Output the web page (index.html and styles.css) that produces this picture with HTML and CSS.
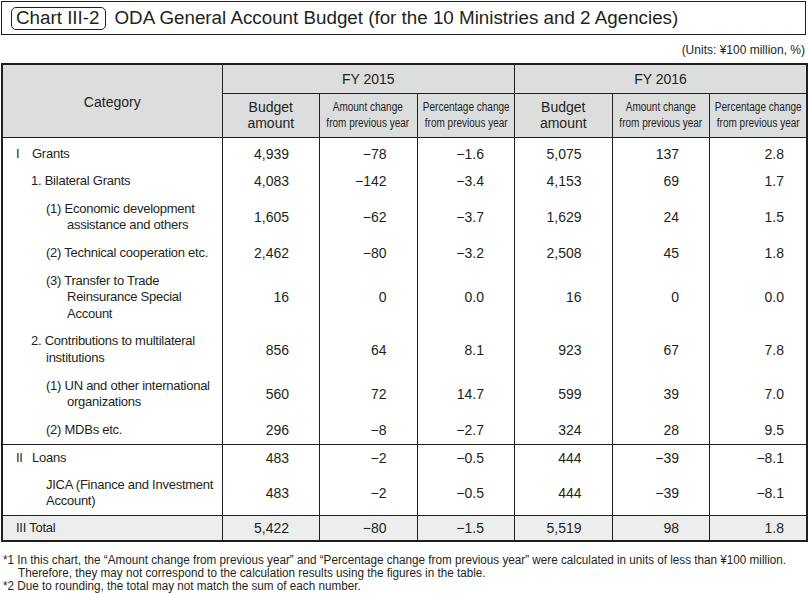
FILE: index.html
```html
<!DOCTYPE html>
<html lang="en">
<head>
<meta charset="utf-8">
<title>Chart III-2 ODA General Account Budget</title>
<link rel="stylesheet" href="styles.css">
</head>
<body>
<div class="page">
  <header class="title-box">
    <span class="chart-tag">Chart III-2</span>
    <h1 class="title">ODA General Account Budget (for the 10 Ministries and 2 Agencies)</h1>
  </header>
  <p class="units">(Units: ¥100 million, %)</p>
  <table class="budget">
    <colgroup>
      <col class="c-cat">
      <col class="c-num"><col class="c-num"><col class="c-num">
      <col class="c-num"><col class="c-num"><col class="c-num">
    </colgroup>
    <thead>
      <tr class="hr1">
        <th rowspan="2" class="h-cat">Category</th>
        <th colspan="3" class="h-fy">FY 2015</th>
        <th colspan="3" class="h-fy">FY 2016</th>
      </tr>
      <tr class="hr2">
        <th class="h-sub">Budget<br>amount</th>
        <th class="h-sub"><span class="cond">Amount change<br>from previous year</span></th>
        <th class="h-sub"><span class="cond">Percentage change<br>from previous year</span></th>
        <th class="h-sub">Budget<br>amount</th>
        <th class="h-sub"><span class="cond">Amount change<br>from previous year</span></th>
        <th class="h-sub"><span class="cond">Percentage change<br>from previous year</span></th>
      </tr>
    </thead>
    <tbody class="grp">
      <tr class="first">
        <td class="cat l0"><span class="rn">I</span>Grants</td>
        <td class="n">4,939</td><td class="n">−78</td><td class="n">−1.6</td>
        <td class="n">5,075</td><td class="n">137</td><td class="n last">2.8</td>
      </tr>
      <tr>
        <td class="cat l1">1. Bilateral Grants</td>
        <td class="n">4,083</td><td class="n">−142</td><td class="n">−3.4</td>
        <td class="n">4,153</td><td class="n">69</td><td class="n last">1.7</td>
      </tr>
      <tr>
        <td class="cat l2">(1) Economic development<br>assistance and others</td>
        <td class="n">1,605</td><td class="n">−62</td><td class="n">−3.7</td>
        <td class="n">1,629</td><td class="n">24</td><td class="n last">1.5</td>
      </tr>
      <tr>
        <td class="cat l2">(2) Technical cooperation etc.</td>
        <td class="n">2,462</td><td class="n">−80</td><td class="n">−3.2</td>
        <td class="n">2,508</td><td class="n">45</td><td class="n last">1.8</td>
      </tr>
      <tr>
        <td class="cat l2">(3) Transfer to Trade<br>Reinsurance Special<br>Account</td>
        <td class="n">16</td><td class="n">0</td><td class="n">0.0</td>
        <td class="n">16</td><td class="n">0</td><td class="n last">0.0</td>
      </tr>
      <tr>
        <td class="cat l1h">2. Contributions to multilateral<br>institutions</td>
        <td class="n">856</td><td class="n">64</td><td class="n">8.1</td>
        <td class="n">923</td><td class="n">67</td><td class="n last">7.8</td>
      </tr>
      <tr>
        <td class="cat l2">(1) UN and other international<br>organizations</td>
        <td class="n">560</td><td class="n">72</td><td class="n">14.7</td>
        <td class="n">599</td><td class="n">39</td><td class="n last">7.0</td>
      </tr>
      <tr>
        <td class="cat l2">(2) MDBs etc.</td>
        <td class="n">296</td><td class="n">−8</td><td class="n">−2.7</td>
        <td class="n">324</td><td class="n">28</td><td class="n last">9.5</td>
      </tr>
    </tbody>
    <tbody class="grp loans">
      <tr>
        <td class="cat l0"><span class="rn">II</span>Loans</td>
        <td class="n">483</td><td class="n">−2</td><td class="n">−0.5</td>
        <td class="n">444</td><td class="n">−39</td><td class="n last">−8.1</td>
      </tr>
      <tr>
        <td class="cat l2b">JICA (Finance and Investment<br>Account)</td>
        <td class="n">483</td><td class="n">−2</td><td class="n">−0.5</td>
        <td class="n">444</td><td class="n">−39</td><td class="n last">−8.1</td>
      </tr>
    </tbody>
    <tbody class="total">
      <tr>
        <td class="cat l0">III Total</td>
        <td class="n">5,422</td><td class="n">−80</td><td class="n">−1.5</td>
        <td class="n">5,519</td><td class="n">98</td><td class="n last">1.8</td>
      </tr>
    </tbody>
  </table>
  <div class="notes">
    <p class="note"><span class="nt">*1 In this chart, the “Amount change from previous year” and “Percentage change from previous year” were calculated in units of less than ¥100 million.</span></p>
    <p class="note cont"><span class="nt">Therefore, they may not correspond to the calculation results using the figures in the table.</span></p>
    <p class="note"><span class="nt">*2 Due to rounding, the total may not match the sum of each number.</span></p>
  </div>
</div>
</body>
</html>
```
FILE: styles.css
```css
* { box-sizing: border-box; }

html, body { overflow: hidden; }

body {
  margin: 0;
  background: #ffffff;
  color: #231f20;
  font-family: "Liberation Sans", Arial, sans-serif;
}

.page {
  width: 808px;
  padding: 1px 2px 0 1px;
}

/* ---------- title ---------- */
.title-box {
  display: flex;
  align-items: center;
  height: 34px;
  border: 1px solid #231f20;
  padding-left: 9px;
}

.chart-tag {
  display: inline-flex;
  align-items: center;
  height: 23px;
  padding: 0 5px 0 4px;
  border: 1px solid #231f20;
  border-radius: 5px;
  font-size: 18.8px;
  line-height: 1;
}

.title {
  margin: 0 0 0 9px;
  font-size: 18.8px;
  font-weight: normal;
  line-height: 1;
}

/* ---------- units ---------- */
.units {
  margin: 8px 1px 0 0;
  text-align: right;
  font-size: 12px;
  line-height: 14px;
}

/* ---------- table ---------- */
.budget {
  margin-top: 6px;
  width: 806px;
  border-collapse: collapse;
  table-layout: fixed;
  border: 2px solid #231f20;
}

.c-cat { width: 220px; }
.c-num { width: 97.5px; }

.budget th,
.budget td {
  border-left: 1px solid #231f20;
  border-right: 1px solid #231f20;
  padding: 0;
  vertical-align: middle;
}

.budget thead th {
  background: #dcdddd;
  font-weight: normal;
  text-align: center;
  border: 1px solid #231f20;
}

.budget thead tr:first-child th { border-top: 2px solid #231f20; }

.budget th.h-cat {
  font-size: 14px;
  padding-top: 2px;
}

.hr1 th.h-fy {
  height: 29px;
  font-size: 14px;
}

.hr2 th {
  height: 44px;
  line-height: 16px;
  white-space: nowrap;
}

.h-sub { font-size: 14px; }

.cond {
  display: inline-block;
  margin: 0 -15px;
  font-size: 12.5px;
  line-height: 16px;
  transform: scaleX(0.8);
  transform-origin: center center;
}

.grp {
  border-top: 1px solid #231f20;
  border-bottom: 1px solid #231f20;
}

.budget .grp td {
  padding-top: 5.6px;
  padding-bottom: 5.6px;
  line-height: 16.5px;
}

.budget .grp tr.first td { padding-top: 8px; }

.budget .loans td {
  padding-top: 5.2px;
  padding-bottom: 5.2px;
}

.budget .total td {
  background: #eceeed;
  padding-top: 3.8px;
  padding-bottom: 3.8px;
  line-height: 16.5px;
}

.cat {
  font-size: 13px;
  letter-spacing: -0.25px;
  white-space: nowrap;
}

.budget td.l0 { padding-left: 13px; }
.budget td.l1 { padding-left: 28px; }
.budget td.l1h { padding-left: 43px; text-indent: -15px; }
.budget td.l2 { padding-left: 64px; text-indent: -21px; }
.budget td.l2b { padding-left: 43px; }

.rn {
  display: inline-block;
  width: 16px;
  text-indent: 0;
}

.budget td.n {
  font-size: 14px;
  text-align: right;
  padding-right: 30px;
}

.budget td.n.last { padding-right: 22px; }

/* ---------- notes ---------- */
.notes {
  width: 805px;
  margin-top: 12px;
  font-size: 12px;
  line-height: 13px;
  overflow: hidden;
}

.note {
  margin: 0 0 0 2px;
  white-space: nowrap;
  height: 13px;
}

.note.cont { padding-left: 15px; }

.nt {
  display: inline-block;
  transform: scaleX(0.975);
  transform-origin: left center;
}
```
